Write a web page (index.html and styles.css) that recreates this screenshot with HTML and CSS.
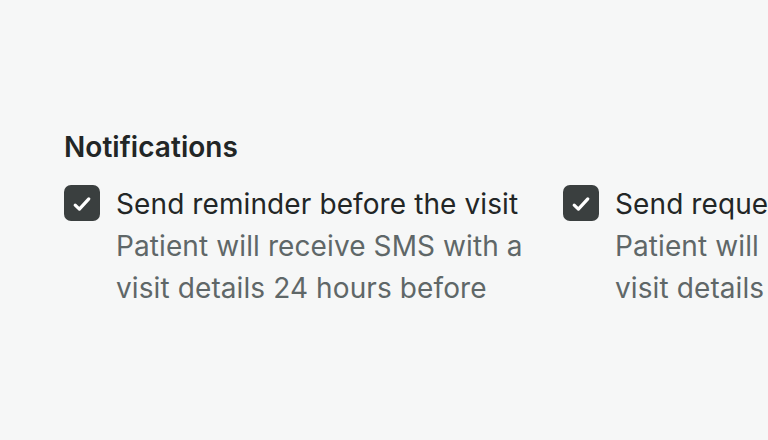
FILE: index.html
```html
<!DOCTYPE html>
<html>
<head>
<meta charset="utf-8">
<link rel="stylesheet" href="styles.css">
</head>
<body>
<section class="settings">
  <h2 class="heading">Notifications</h2>
  <div class="options">
    <label class="option">
      <span class="box"><svg width="36" height="36" viewBox="0 0 36 36"><path d="M11.2 20.2l4.2 3.9l9.4-10.2" fill="none" stroke="#fff" stroke-width="3.2" stroke-linecap="round" stroke-linejoin="round"/></svg></span>
      <span class="text">
        <span class="title">Send reminder before the visit</span>
        <span class="desc">Patient will receive SMS with a visit details 24 hours before</span>
      </span>
    </label>
    <label class="option">
      <span class="box"><svg width="36" height="36" viewBox="0 0 36 36"><path d="M11.2 20.2l4.2 3.9l9.4-10.2" fill="none" stroke="#fff" stroke-width="3.2" stroke-linecap="round" stroke-linejoin="round"/></svg></span>
      <span class="text">
        <span class="title">Send request for feedback</span>
        <span class="desc">Patient will receive SMS with a visit details and feedback form</span>
      </span>
    </label>
  </div>
</section>
</body>
</html>
```

FILE: styles.css
```css
html, body {
  margin: 0;
  padding: 0;
  background: #f6f7f7;
  width: 768px;
  height: 440px;
  overflow: hidden;
}
.settings {
  padding: 127px 0 0 64px;
  font-family: Inter, "Noto Sans", sans-serif;
  color: #222626;
}
.heading {
  margin: 0 0 16px;
  font-size: 28px;
  line-height: 40px;
  font-weight: 600;
  letter-spacing: 0.05px;
}
.options {
  display: flex;
  gap: 32px;
  width: 1000px;
}
.option {
  display: flex;
  gap: 16px;
  width: 467px;
  flex: none;
}
.box {
  flex: none;
  width: 36px;
  height: 36px;
  margin-top: 2px;
  border-radius: 7px;
  background: #3a3f3f;
  display: flex;
}
.text {
  display: flex;
  flex-direction: column;
  font-size: 28px;
  line-height: 42px;
  letter-spacing: 0.1px;
}
.title {
  color: #222626;
}
.desc {
  color: #5f6768;
}
```
